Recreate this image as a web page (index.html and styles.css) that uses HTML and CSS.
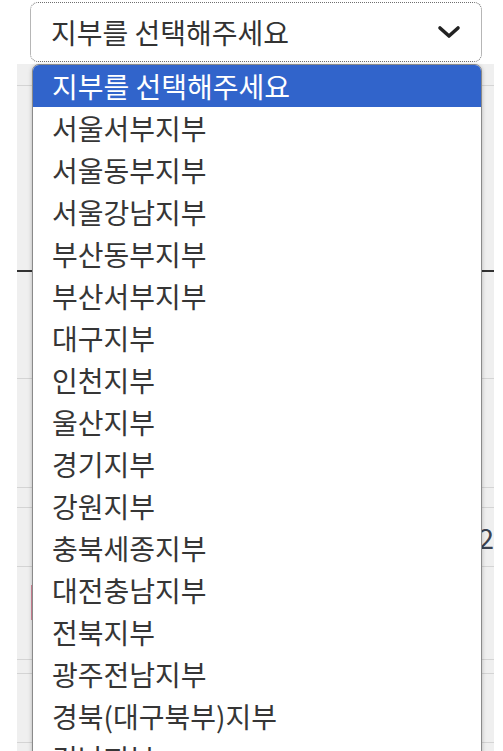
FILE: index.html
```html
<!DOCTYPE html>
<html>
<head>
    <link rel="stylesheet" href="styles.css">
</head>
<body>
    <div class="select-box">
        <span class="select-value">지부를 선택해주세요</span>
        <svg class="chevron" width="24" height="14" viewBox="0 0 24 14" fill="none" stroke="currentColor" stroke-width="3.6" stroke-linecap="round" stroke-linejoin="round">
            <polyline points="3,3 12,11 21,3"></polyline>
        </svg>
    </div>

    <div class="backdrop">
        <div class="row" style="height: 22px"></div>
        <div class="row row-dark" style="height: 186px"></div>
        <div class="row" style="height: 107px"></div>
        <div class="row" style="height: 109px"></div>
        <div class="row" style="height: 20px"></div>
        <div class="row row-num" style="height: 59px"><span>2</span></div>
        <div class="row" style="height: 75px"><div class="mark"></div></div>
        <div class="row" style="height: 14px"></div>
        <div class="row" style="height: 69px"></div>
        <div class="row" style="height: 23px"></div>
    </div>

    <ul class="options">
        <li class="option selected">지부를 선택해주세요</li>
        <li class="option">서울서부지부</li>
        <li class="option">서울동부지부</li>
        <li class="option">서울강남지부</li>
        <li class="option">부산동부지부</li>
        <li class="option">부산서부지부</li>
        <li class="option">대구지부</li>
        <li class="option">인천지부</li>
        <li class="option">울산지부</li>
        <li class="option">경기지부</li>
        <li class="option">강원지부</li>
        <li class="option">충북세종지부</li>
        <li class="option">대전충남지부</li>
        <li class="option">전북지부</li>
        <li class="option">광주전남지부</li>
        <li class="option">경북(대구북부)지부</li>
        <li class="option">경남지부</li>
    </ul>
</body>
</html>
```

FILE: styles.css
```css
* {
    box-sizing: border-box;
    margin: 0;
    padding: 0;
}

html, body {
    height: 100%;
    overflow: hidden;
}

body {
    position: relative;
    background-color: #ffffff;
    color: #333333;
    font-family: "Noto Sans CJK KR", "Noto Sans", sans-serif;
    padding-top: 2px;
}

.select-box {
    margin-left: 30px;
    width: 452px;
    height: 60px;
    border: 1px dotted #6f6f6f;
    border-radius: 8px;
    background-color: #ffffff;
    display: flex;
    align-items: center;
    justify-content: space-between;
    padding: 0 20px 0 20px;
}

.select-value {
    font-size: 28px;
    line-height: 1;
    color: #333333;
}

.chevron {
    color: #222222;
}

.backdrop {
    margin-left: 17px;
    width: 477px;
    margin-top: 2px;
    background-color: #efefef;
}

.row {
    border-bottom: 1px solid #d4d4d4;
}

.row-dark {
    border-bottom: 2px solid #333333;
}

.row-num {
    display: flex;
    justify-content: flex-end;
    align-items: center;
    font-size: 28px;
    color: #3a4250;
    line-height: 1;
}

.mark {
    margin: 18px 0 0 14px;
    width: 2px;
    height: 35px;
    background-color: #d98a9c;
}

.options {
    position: absolute;
    left: 32px;
    top: 64px;
    width: 450px;
    height: 700px;
    list-style: none;
    background-color: #ffffff;
    border: 1px solid #8a8a8a;
    border-radius: 7px 7px 0 0;
    box-shadow: 0 1px 4px rgba(0, 0, 0, 0.25);
    overflow: hidden;
}

.option {
    height: 42px;
    line-height: 42px;
    padding-left: 19px;
    font-size: 28px;
    color: #363636;
    white-space: nowrap;
}

.option.selected {
    background-color: #3164cb;
    color: #ffffff;
}
```
